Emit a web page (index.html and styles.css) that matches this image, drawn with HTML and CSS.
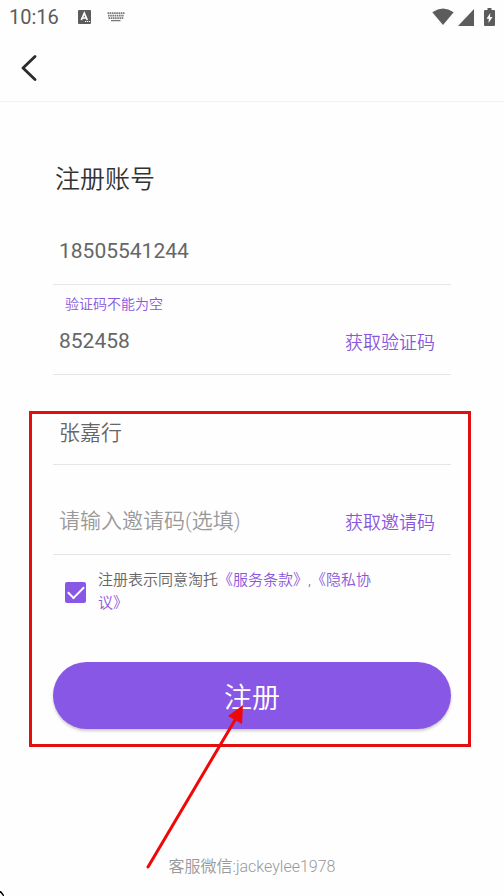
FILE: index.html
```html
<!DOCTYPE html>
<html lang="zh-CN">
<head>
<meta charset="utf-8">
<meta name="viewport" content="width=device-width, initial-scale=1">
<title>注册账号</title>
<link rel="stylesheet" href="styles.css">
</head>
<body>
<div class="screen">
  <div class="status">
    <span class="time">10:16</span>
    <svg class="status-app" width="14" height="14" viewBox="0 0 14 14" aria-hidden="true">
      <rect width="13" height="14" rx="1" fill="#5c5c5c"/>
      <path d="M3.3 10 6.3 3.2 9.3 10M4.5 8h3.6" fill="none" stroke="#fff" stroke-width="1.7"/>
      <path d="M7 11.5h1.2M9 11.5h1.2M11 11.5h1.2" stroke="#fff" stroke-width="1.2"/>
    </svg>
    <svg class="status-keys" width="18" height="10" viewBox="0 0 18 10" aria-hidden="true">
      <g stroke="#777" stroke-width="1.8" stroke-dasharray="1.6 .6">
        <path d="M.5 1.2h17M1 3.7h16M1.5 6.2h15"/>
      </g>
      <path d="M4 8.6h9.500" stroke="#777" stroke-width="1.3"/>
    </svg>
    <div class="status-right">
      <svg width="22" height="18" viewBox="0 0 22 18" aria-hidden="true">
        <path d="M.3 4.200Q11-3 21.700 4.200L11 17z" fill="#5c5c5c"/>
      </svg>
      <svg width="16" height="17" viewBox="0 0 16 17" aria-hidden="true">
        <path d="M16 0v17H0z" fill="#5c5c5c"/>
      </svg>
      <svg class="battery" width="11" height="18" viewBox="0 0 11 18" aria-hidden="true">
        <path d="M3.500 0h4v2H10q1 0 1 1v14q0 1-1 1H1q-1 0-1-1V3q0-1 1-1h2.500z" fill="#5c5c5c"/>
        <path d="M6.300 5 2.500 10.700h2.300L4.500 15l4-6H6z" fill="#fff"/>
      </svg>
    </div>
  </div>
  <header class="nav">
    <button class="back" type="button" aria-label="返回">
      <svg width="16" height="26" viewBox="0 0 16 26" aria-hidden="true">
        <path d="M14 1.500 2 13l12 11.500" fill="none" stroke="#2b2b2b" stroke-width="2.800" stroke-linecap="round" stroke-linejoin="round"/>
      </svg>
    </button>
  </header>
  <main class="content">
    <h1 class="title">注册账号</h1>
    <form class="form">
      <div class="field">
        <input class="input" type="tel" aria-label="手机号" value="18505541244">
      </div>
      <div class="field">
        <label class="hint" for="code">验证码不能为空</label>
        <input class="input" id="code" type="text" value="852458">
        <button class="action" type="button">获取验证码</button>
      </div>
      <div class="marked">
        <div class="field">
          <input class="input name" type="text" aria-label="姓名" value="张嘉行">
        </div>
        <div class="field">
          <input class="input" type="text" aria-label="邀请码" placeholder="请输入邀请码(选填)">
          <button class="action" type="button">获取邀请码</button>
        </div>
        <div class="agree">
          <input class="check" id="agree" type="checkbox" checked>
          <div class="terms"><label for="agree">注册表示同意淘托</label><a href="#terms">《服务条款》</a>,<a href="#privacy">《隐私协议》</a></div>
        </div>
        <button class="submit" type="button">注册</button>
        <div class="frame"></div>
        <svg class="arrow" width="100" height="166" viewBox="0 0 100 166" aria-hidden="true">
          <path d="M3 163 90 16" stroke="#f00808" stroke-width="3" stroke-linecap="round"/>
          <path d="M98 1 83 12 97 20z" fill="#f00808"/>
        </svg>
      </div>
    </form>
  </main>
  <footer class="support">客服微信:jackeylee1978</footer>
  <svg class="pointer" width="4" height="5" viewBox="0 0 4 5" aria-hidden="true">
    <path d="M0 0 4 5" stroke="#000" stroke-width="1.500"/>
  </svg>
</div>
</body>
</html>
```

FILE: styles.css
```css
* {
  box-sizing: border-box;
}

body {
  margin: 0;
  background: #fefefe;
  color: #666;
  font-family: Roboto, "Noto Sans CJK SC", sans-serif;
  font-weight: 400;
}

button,
input {
  margin: 0;
  padding: 0;
  border: 0;
  background: none;
  color: inherit;
  font: inherit;
}

a,
.action,
.hint {
  color: #8957dc;
  text-decoration: none;
}

.title,
.hint,
.name,
.action,
.terms,
.submit,
.support,
.input::placeholder {
  font-weight: 350;
}

.screen {
  position: relative;
  display: flex;
  flex-direction: column;
  min-height: 100vh;
}

.status {
  display: flex;
  align-items: center;
  height: 34px;
  padding: 0 9px;
}

.time {
  color: #5c5c5c;
  font-size: 20px;
}

.status-app {
  margin-left: 19px;
}

.status-keys {
  margin-left: 15px;
}

.status-right {
  display: flex;
  align-items: center;
  gap: 4px;
  margin-left: auto;
}

.battery {
  margin-left: 6px;
}

.nav {
  display: flex;
  align-items: center;
  height: 68px;
  padding: 0 21px;
  border-bottom: 1px solid #f3f3f3;
}

.back {
  display: flex;
}

.content {
  padding: 63px 53px 0;
}

.title {
  margin: 0;
  padding-left: 2px;
  color: #333;
  font-size: 25px;
  line-height: 30px;
}

.field {
  display: grid;
  grid-template: 36px 40px / 1fr auto;
  align-items: center;
  height: 90px;
  padding: 0 16px 0 6px;
  border-bottom: 1px solid #e6e6e6;
}

.hint {
  grid-area: 1 / 1 / 2 / 3;
  padding-left: 6px;
  font-size: 14px;
}

.input {
  grid-area: 2 / 1;
  width: 100%;
  min-width: 0;
  height: 40px;
  font-size: 21px;
  outline: 0;
}

.input::placeholder {
  color: #999;
}

.action {
  grid-area: 2 / 2;
  font-size: 18px;
}

.marked {
  position: relative;
}

.agree {
  display: flex;
  align-items: center;
  gap: 12px;
  margin-bottom: 47px;
  padding: 14px 68px 0 12px;
}

.check {
  flex: none;
  display: grid;
  place-items: center;
  width: 21px;
  height: 21px;
  border-radius: 2px;
  background: #8957e5;
  appearance: none;
}

.check:checked::before {
  content: "";
  width: 14px;
  height: 7px;
  margin-bottom: 4px;
  border: solid #fff;
  border-width: 0 0 2px 2px;
  transform: rotate(-45deg);
}

.terms {
  font-size: 15px;
  line-height: 23px;
}

.submit {
  display: block;
  width: 100%;
  height: 67px;
  border-radius: 34px;
  background: #8957e5;
  box-shadow: 0 2px 3px #0003;
  color: #fff;
  font-size: 28px;
}

.frame {
  position: absolute;
  inset: 36px -20px -18px -24px;
  border: 3px solid #e20f0f;
  pointer-events: none;
}

.arrow {
  position: absolute;
  bottom: -141px;
  left: calc(50% - 107px);
  pointer-events: none;
}

.support {
  margin-top: auto;
  padding-bottom: 17px;
  color: #999;
  font-size: 16px;
  line-height: 24px;
  text-align: center;
}

.pointer {
  position: absolute;
  bottom: 0;
  left: 0;
}
```
